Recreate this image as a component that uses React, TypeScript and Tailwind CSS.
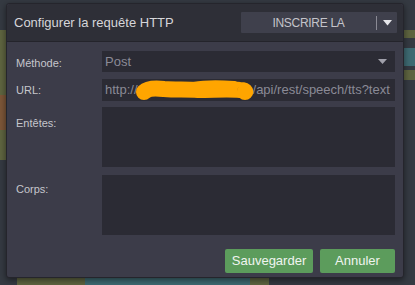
import React from "react";

export default function App() {
  return (
    <div className="relative w-[415px] h-[285px] overflow-hidden bg-[#353a42]" style={{ fontFamily: '"Liberation Sans", Arial, sans-serif' }}>
      {/* background canvas pieces */}
      <div className="absolute left-0 top-[30px] w-[20px] h-[65px] bg-[#5e6440]" />
      <div className="absolute left-0 top-[95px] w-[20px] h-[35px] bg-[#7c5638]" />
      <div className="absolute left-0 top-[130px] w-[20px] h-[30px] bg-[#5e6440]" />
      <div className="absolute right-0 top-[30px] w-[20px] h-[8px] bg-[#5e6440]" />
      <div className="absolute right-0 top-[48px] w-[20px] h-[18px] bg-[#3e6a72]" />
      <div className="absolute right-0 top-[70px] w-[20px] h-[10px] bg-[#5e6440]" />
      <div className="absolute left-[17px] top-[276px] w-[252px] h-[9px] bg-[#5e6440]" />
      <div className="absolute left-[85px] top-[276px] w-[165px] h-[9px] bg-[#3e6a72]" />

      {/* dialog */}
      <div className="absolute left-[6px] top-[3px] w-[398px] h-[275px] flex flex-col bg-[#3c3c49] border border-[#25252c] rounded-[3px] shadow-[0_2px_6px_rgba(0,0,0,0.5)]">
        <div className="h-[38px] shrink-0 flex items-center justify-between pl-[7px] pr-[6px] bg-[#2e2f37] border-b border-[#24242b] rounded-t-[3px]">
          <span className="text-[13px] text-[#d6d6da]">Configurer la requête HTTP</span>
          <div className="flex items-center h-[21px] w-[156px] bg-[#3f404c] rounded-[1px]">
            <span className="flex-1 text-center text-[12px] text-[#c4c4ca] tracking-[-0.3px]">INSCRIRE LA</span>
            <div className="w-px h-[14px] bg-[#8a8a94]" />
            <div className="w-[20px] flex justify-center">
              <svg width="9" height="6" viewBox="0 0 9 6"><path d="M0 0 H9 L4.5 5.5 Z" fill="#e6e6ea" /></svg>
            </div>
          </div>
        </div>

        <div className="flex-1 flex flex-col pl-[9px] pr-[8px] pt-[9px]">
          <div className="flex items-center h-[21px] mb-[7px]">
            <span className="w-[86px] text-[11px] text-[#c6c6cc] pt-[4px]">Méthode:</span>
            <div className="flex-1 h-full bg-[#2b2b34] flex items-center justify-between pl-[3px] pr-[8px]">
              <span className="text-[13px] text-[#8a8a96]">Post</span>
              <svg width="9" height="5" viewBox="0 0 9 5"><path d="M0 0 H9 L4.5 5 Z" fill="#a0a0aa" /></svg>
            </div>
          </div>
          <div className="flex items-center h-[22px] mb-[6px]">
            <span className="w-[86px] text-[11px] text-[#c6c6cc]">URL:</span>
            <div className="relative flex-1 h-full bg-[#2b2b34] flex items-center pl-[3px] overflow-hidden">
              <span className="text-[13px] text-[#8a8a96] whitespace-nowrap">http://</span>
              <span className="inline-block shrink-0 w-[115px]" />
              <span className="text-[13px] text-[#8a8a96] whitespace-nowrap">/api/rest/speech/tts?text</span>
              <svg className="absolute left-[32px] top-0" width="122" height="23" viewBox="0 0 122 23">
                <path d="M10 13 C 14 9, 22 9, 30 10 C 42 11, 52 10, 64 11 C 80 11, 94 10, 106 11 C 110 11, 112 12, 111 13" stroke="#ffa500" strokeWidth="16" strokeLinecap="round" fill="none" />
                <path d="M60 7 C 70 5, 85 5, 100 6" stroke="#ffa500" strokeWidth="8" strokeLinecap="round" fill="none" />
              </svg>
            </div>
          </div>
          <div className="flex h-[60px] mb-[8px]">
            <span className="w-[86px] text-[11px] text-[#c6c6cc] pt-[8px]">Entêtes:</span>
            <div className="flex-1 h-full bg-[#2b2b34]" />
          </div>
          <div className="flex h-[60px]">
            <span className="w-[86px] text-[11px] text-[#c6c6cc] pt-[6px]">Corps:</span>
            <div className="flex-1 h-full bg-[#2b2b34]" />
          </div>
          <div className="flex justify-end gap-[7px] mt-[14px]">
            <button className="h-[24px] w-[88px] bg-[#5c9c5c] rounded-[2px] text-[13px] text-[#f0f4f0]">Sauvegarder</button>
            <button className="h-[24px] w-[75px] bg-[#5c9c5c] rounded-[2px] text-[13px] text-[#f0f4f0]">Annuler</button>
          </div>
        </div>
      </div>
    </div>
  );
}
